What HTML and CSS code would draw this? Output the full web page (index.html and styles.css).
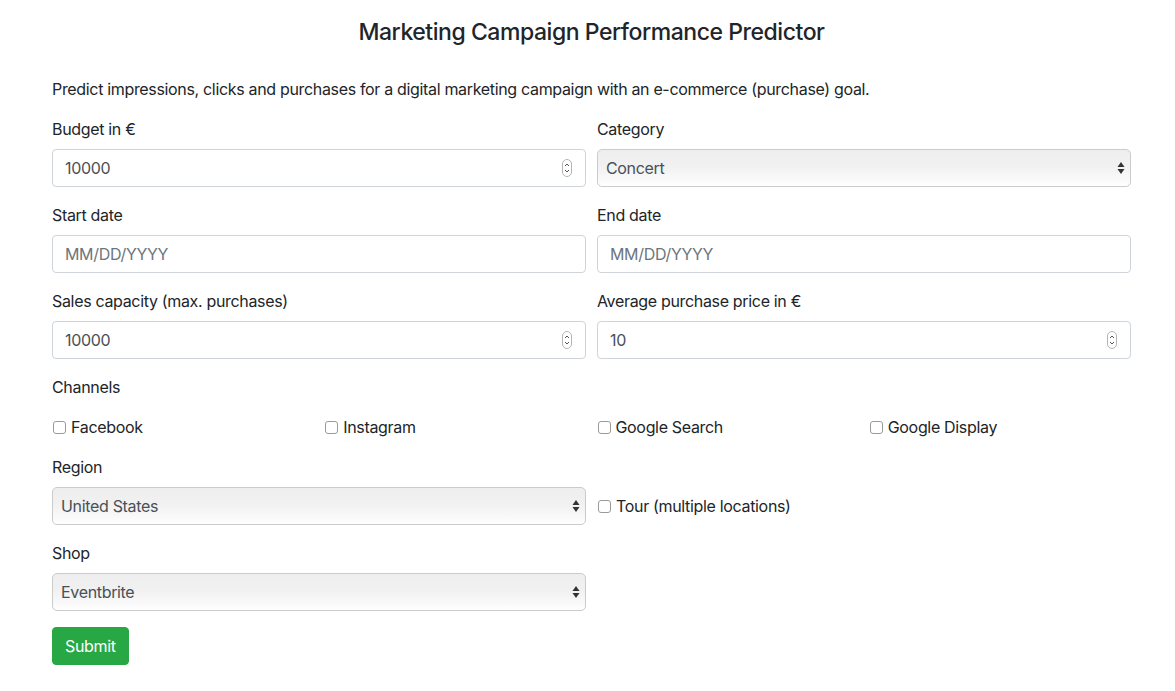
FILE: index.html
```html
<!DOCTYPE html>
<html>
<head>
<meta charset="utf-8">
<link rel="stylesheet" href="styles.css">
</head>
<body>
<div class="container">
  <h1 class="title">Marketing Campaign Performance Predictor</h1>
  <p class="intro">Predict impressions, clicks and purchases for a digital marketing campaign with an e-commerce (purchase) goal.</p>
  <form class="form">
    <div class="row2">
      <div class="group">
        <label class="lbl">Budget in €</label>
        <div class="field">
          <input class="input" type="text" value="10000">
          <span class="spin"><svg width="10" height="18" viewBox="0 0 10 18"><rect x="0.5" y="0.5" width="9" height="17" rx="4.5" fill="#fff" stroke="#b5b5b5"/><path d="M3 7 L5 5 L7 7" fill="none" stroke="#555" stroke-width="1"/><path d="M3 11 L5 13 L7 11" fill="none" stroke="#555" stroke-width="1"/></svg></span>
        </div>
      </div>
      <div class="group">
        <label class="lbl">Category</label>
        <div class="field">
          <div class="select">Concert</div>
          <span class="arrows"><svg width="8" height="14" viewBox="0 0 8 14"><path d="M4 1 L7.5 6 L0.5 6 Z" fill="#333"/><path d="M0.5 8 L7.5 8 L4 13 Z" fill="#333"/></svg></span>
        </div>
      </div>
    </div>
    <div class="row2">
      <div class="group">
        <label class="lbl">Start date</label>
        <div class="field"><input class="input" type="text" placeholder="MM/DD/YYYY"></div>
      </div>
      <div class="group">
        <label class="lbl">End date</label>
        <div class="field"><input class="input" type="text" placeholder="MM/DD/YYYY"></div>
      </div>
    </div>
    <div class="row2">
      <div class="group">
        <label class="lbl">Sales capacity (max. purchases)</label>
        <div class="field">
          <input class="input" type="text" value="10000">
          <span class="spin"><svg width="10" height="18" viewBox="0 0 10 18"><rect x="0.5" y="0.5" width="9" height="17" rx="4.5" fill="#fff" stroke="#b5b5b5"/><path d="M3 7 L5 5 L7 7" fill="none" stroke="#555" stroke-width="1"/><path d="M3 11 L5 13 L7 11" fill="none" stroke="#555" stroke-width="1"/></svg></span>
        </div>
      </div>
      <div class="group">
        <label class="lbl">Average purchase price in €</label>
        <div class="field">
          <input class="input" type="text" value="10">
          <span class="spin"><svg width="10" height="18" viewBox="0 0 10 18"><rect x="0.5" y="0.5" width="9" height="17" rx="4.5" fill="#fff" stroke="#b5b5b5"/><path d="M3 7 L5 5 L7 7" fill="none" stroke="#555" stroke-width="1"/><path d="M3 11 L5 13 L7 11" fill="none" stroke="#555" stroke-width="1"/></svg></span>
        </div>
      </div>
    </div>
    <div class="lbl-row">Channels</div>
    <div class="row4">
      <label class="check"><span class="box"></span>Facebook</label>
      <label class="check"><span class="box"></span>Instagram</label>
      <label class="check"><span class="box"></span>Google Search</label>
      <label class="check"><span class="box"></span>Google Display</label>
    </div>
    <div class="row2">
      <div class="group">
        <label class="lbl">Region</label>
        <div class="field">
          <div class="select">United States</div>
          <span class="arrows"><svg width="8" height="14" viewBox="0 0 8 14"><path d="M4 1 L7.5 6 L0.5 6 Z" fill="#333"/><path d="M0.5 8 L7.5 8 L4 13 Z" fill="#333"/></svg></span>
        </div>
      </div>
      <div class="group tourcol">
        <label class="check"><span class="box"></span>Tour (multiple locations)</label>
      </div>
    </div>
    <div class="row2">
      <div class="group">
        <label class="lbl">Shop</label>
        <div class="field">
          <div class="select">Eventbrite</div>
          <span class="arrows"><svg width="8" height="14" viewBox="0 0 8 14"><path d="M4 1 L7.5 6 L0.5 6 Z" fill="#333"/><path d="M0.5 8 L7.5 8 L4 13 Z" fill="#333"/></svg></span>
        </div>
      </div>
      <div></div>
    </div>
    <button class="btn" type="button">Submit</button>
  </form>
</div>
</body>
</html>
```
FILE: styles.css
```css
html, body {
  margin: 0;
  padding: 0;
  background: #fff;
}
body {
  font-family: Inter, "Noto Sans", "Liberation Sans", sans-serif;
  font-size: 16px;
  line-height: 24px;
  letter-spacing: -0.33px;
  color: #212529;
}
.container {
  margin-left: 52px;
  width: 1079px;
  padding-top: 17px;
}
.title {
  font-size: 23px;
  font-weight: 500;
  line-height: 30px;
  letter-spacing: -0.45px;
  margin: 0 0 30px 0;
  text-align: center;
  color: #212529;
}
.intro {
  margin: 0 0 16px 0;
}
.form {
  display: flex;
  flex-direction: column;
}
.row2 {
  display: grid;
  grid-template-columns: 1fr 1fr;
  column-gap: 11px;
}
.row4 {
  display: grid;
  grid-template-columns: repeat(4, 1fr);
  column-gap: 0;
  margin-right: -10px;
  margin-bottom: 16px;
}
.group {
  display: flex;
  flex-direction: column;
  margin-bottom: 16px;
}
.lbl {
  display: block;
  margin-bottom: 8px;
}
.lbl-row {
  margin-bottom: 16px;
}
.field {
  position: relative;
  height: 38px;
}
.input {
  box-sizing: border-box;
  width: 100%;
  height: 38px;
  padding: 6px 12px;
  font: inherit;
  letter-spacing: -0.33px;
  color: #495057;
  border: 1px solid #ced4da;
  border-radius: 4px;
  background: #fff;
  outline: none;
}
.input::placeholder {
  color: #6c757d;
  opacity: 1;
}
.spin {
  position: absolute;
  right: 14px;
  top: 10px;
  line-height: 0;
}
.select {
  box-sizing: border-box;
  height: 38px;
  padding: 6px 8px;
  color: #495057;
  border: 1px solid #cbcbcb;
  border-radius: 5px;
  background: linear-gradient(to bottom, #eeeeee 0%, #f1f1f1 45%, #fafafa 85%, #ffffff 100%);
}
.arrows {
  position: absolute;
  right: 6px;
  top: 12px;
  line-height: 0;
}
.check {
  display: flex;
  align-items: center;
  height: 24px;
}
.box {
  display: inline-block;
  box-sizing: border-box;
  width: 13px;
  height: 13px;
  border: 1px solid #9a9a9a;
  border-radius: 3px;
  margin-left: 1px;
  margin-right: 5px;
  background: #fff;
}
.tourcol {
  justify-content: flex-end;
  padding-bottom: 7px;
}
.btn {
  align-self: flex-start;
  font: inherit;
  font-size: 16px;
  line-height: 24px;
  letter-spacing: -0.33px;
  color: #fff;
  background: #28a745;
  border: 1px solid #28a745;
  border-radius: 4px;
  padding: 6px 12px;
}
```
